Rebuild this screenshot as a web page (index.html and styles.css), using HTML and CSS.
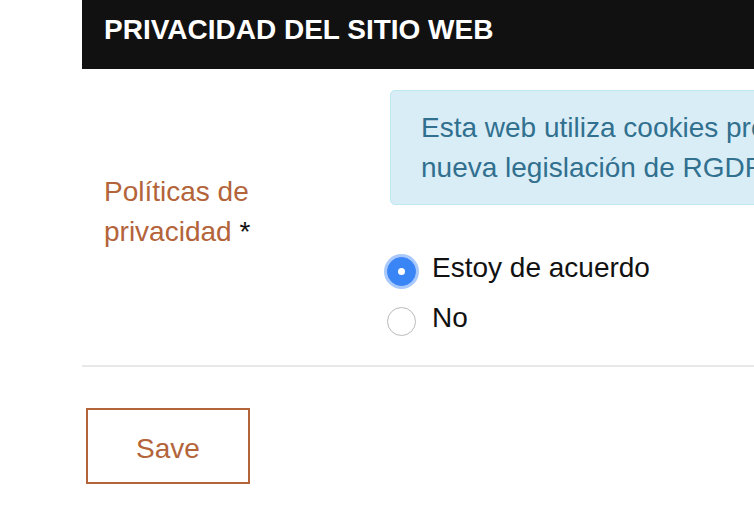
FILE: index.html
```html
<!DOCTYPE html>
<html>
<head>
  <meta charset="utf-8">
  <link rel="stylesheet" href="styles.css">
</head>
<body>
  <div class="page">
    <div class="section-title">PRIVACIDAD DEL SITIO WEB</div>
    <div class="form-row">
      <label class="field-label">Políticas de privacidad <span class="req">*</span></label>
      <div class="field-control">
        <div class="alert-info">Esta web utiliza cookies propias para cumplir con la<br>nueva legislación de RGDP europea.</div>
        <div class="radio-list">
          <label class="radio-item"><input type="radio" name="privacy" checked><span>Estoy de acuerdo</span></label>
          <label class="radio-item"><input type="radio" name="privacy"><span>No</span></label>
        </div>
      </div>
    </div>
    <div class="actions">
      <button class="btn-save">Save</button>
    </div>
  </div>
</body>
</html>
```

FILE: styles.css
```css
body { margin: 0; overflow: hidden; background: #fff; font-family: "Liberation Sans", Arial, sans-serif; font-size: 28px; line-height: 40px; color: #111; }
.page { margin-left: 82px; width: 1100px; }
.section-title { background: #111; color: #fff; font-weight: bold; font-size: 28px; line-height: 27px; height: 69px; box-sizing: border-box; padding: 16px 0 0 22px; }
.form-row { display: grid; grid-template-columns: 308px 1fr; padding: 21px 0 20px; border-bottom: 2px solid #e8e8e8; }
.field-label { padding: 82px 0 0 22px; max-width: 190px; color: #b4643a; }
.field-label .req { color: #111; }
.alert-info { width: 640px; background: #d9edf7; border: 1px solid #bce8f1; border-radius: 5px; color: #31708f; padding: 17px 30px 16px; white-space: nowrap; }
.radio-list { margin-top: 40px; }
.radio-item { display: flex; align-items: center; gap: 16px; height: 50px; margin-left: -3px; }
.radio-item span { position: relative; top: -2px; }
.radio-item input { appearance: none; -webkit-appearance: none; margin: 0; width: 29px; height: 29px; border-radius: 50%; border: 1px solid #b9b9b9; background: #fff; box-sizing: border-box; position: relative; top: 1px; }
.radio-item input:checked { background: #3a85f6; border-color: #3a85f6; box-shadow: 0 0 0 3px rgba(98, 157, 250, 0.55); }
.radio-item input:checked::after { content: ""; position: absolute; left: 10px; top: 10px; width: 7px; height: 7px; border-radius: 50%; background: #fff; }
.actions { padding: 41px 0 0 4px; }
.btn-save { width: 164px; height: 76px; border: 2px solid #b4643a; background: #fff; color: #b4643a; font-family: inherit; font-size: 28px; padding: 6px 0 0; }
```
